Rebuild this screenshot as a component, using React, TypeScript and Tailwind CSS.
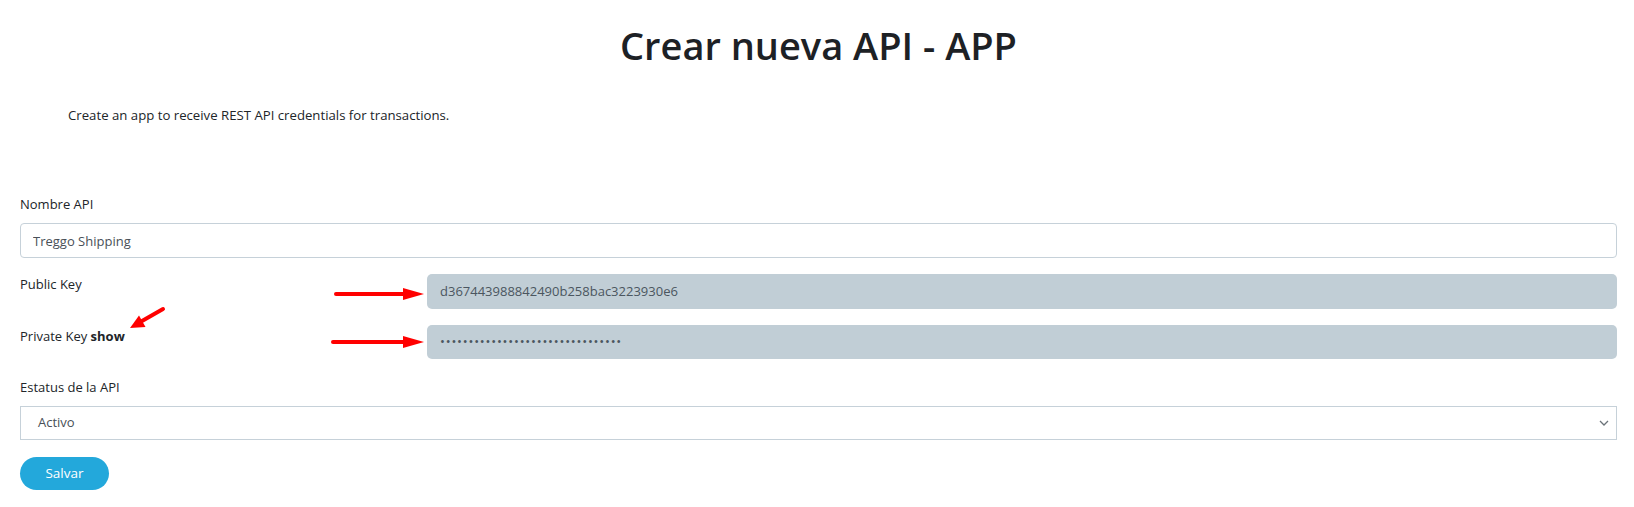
import { useState } from "react";

function Annotations() {
  return (
    <svg
      className="absolute inset-0 pointer-events-none"
      width={1634}
      height={507}
      viewBox="0 0 1634 507"
    >
      {/* flecha public key */}
      <line x1={336} y1={294} x2={406} y2={294} stroke="#ff0000" strokeWidth={4} strokeLinecap="round" />
      <polygon points="403,288 424,294 403,300" fill="#ff0000" />
      {/* flecha private key */}
      <line x1={333} y1={342} x2={406} y2={342} stroke="#ff0000" strokeWidth={4} strokeLinecap="round" />
      <polygon points="403,336 424,342 403,348" fill="#ff0000" />
      {/* flecha show */}
      <line x1={163} y1={309} x2={142} y2={321} stroke="#ff0000" strokeWidth={4} strokeLinecap="round" />
      <polygon points="145.5,327 130,328 139,315.5" fill="#ff0000" />
    </svg>
  );
}

export default function App() {
  const [name, setName] = useState("Treggo Shipping");
  const [status, setStatus] = useState("Activo");
  const [open, setOpen] = useState(false);
  const [showKey, setShowKey] = useState(false);
  const privateKey = "a91f0c2e77b34d5e8c61f2a09b4d7e31";

  return (
    <div
      className="relative w-[1634px] h-[507px] bg-white text-[#212529] overflow-hidden"
      style={{ fontFamily: '"Open Sans", "Noto Sans", Arial, sans-serif' }}
    >
      <div className="pl-5 pr-[17px]">
        <h1 className="pt-[22px] text-center text-[38px] leading-[46px] font-semibold text-[#1d2125]">
          Crear nueva API - APP
        </h1>

        <p className="mt-[37px] ml-12 text-[13.2px] leading-[21px]">
          Create an app to receive REST API credentials for transactions.
        </p>

        <form className="mt-[68px]" onSubmit={(e) => e.preventDefault()}>
          {/* Nombre */}
          <label className="block text-[13px] leading-[21px]">Nombre API</label>
          <input
            value={name}
            onChange={(e) => setName(e.target.value)}
            className="mt-2 block w-full h-[35px] px-3 border border-[#c6d1d9] rounded-[4px] text-[13px] text-[#495057] outline-none"
          />

          {/* Keys */}
          <div className="mt-4 flex items-start">
            <label className="w-[407px] text-[13px] leading-[21px]">Public Key</label>
            <div className="flex-1 h-[35px] px-[13px] flex items-center bg-[#c1ced6] rounded-[5px] text-[13px] text-[#4b5660]">
              d367443988842490b258bac3223930e6
            </div>
          </div>

          <div className="mt-4 flex items-start">
            <label className="w-[407px] text-[13px] leading-[21px] pt-[1px]">
              Private Key{" "}
              <span className="font-bold cursor-pointer" onClick={() => setShowKey(!showKey)}>
                show
              </span>
            </label>
            <div className="flex-1 h-[34px] px-[13px] flex items-center bg-[#c1ced6] rounded-[5px] text-[13px] text-[#4b5660]">
              {showKey ? (
                privateKey
              ) : (
                <span className="tracking-[0.8px]">••••••••••••••••••••••••••••••••</span>
              )}
            </div>
          </div>

          {/* Estatus */}
          <label className="mt-[18px] block text-[13px] leading-[21px]">Estatus de la API</label>
          <div
            className="relative mt-2 h-[34px] flex items-center justify-between pl-[17px] pr-[7px] bg-white border border-[#c6d1d9] cursor-pointer"
            onClick={() => setOpen(!open)}
          >
            <span className="text-[13px] text-[#495057]">{status}</span>
            <svg width="10" height="6" viewBox="0 0 10 6">
              <path d="M1 1l4 4 4-4" fill="none" stroke="#6b7379" strokeWidth="1.3" />
            </svg>
            {open && (
              <div className="absolute left-0 right-0 top-full z-10 bg-white border border-[#c6d1d9] text-[13px]">
                {["Activo", "Inactivo"].map((s) => (
                  <div
                    key={s}
                    className="px-[17px] py-1 hover:bg-[#e9eef1]"
                    onClick={() => setStatus(s)}
                  >
                    {s}
                  </div>
                ))}
              </div>
            )}
          </div>

          <button
            type="submit"
            className="mt-[17px] w-[89px] h-[33px] rounded-full bg-[#23a8db] text-white text-[13.5px]"
          >
            Salvar
          </button>
        </form>
      </div>

      <Annotations />
    </div>
  );
}
